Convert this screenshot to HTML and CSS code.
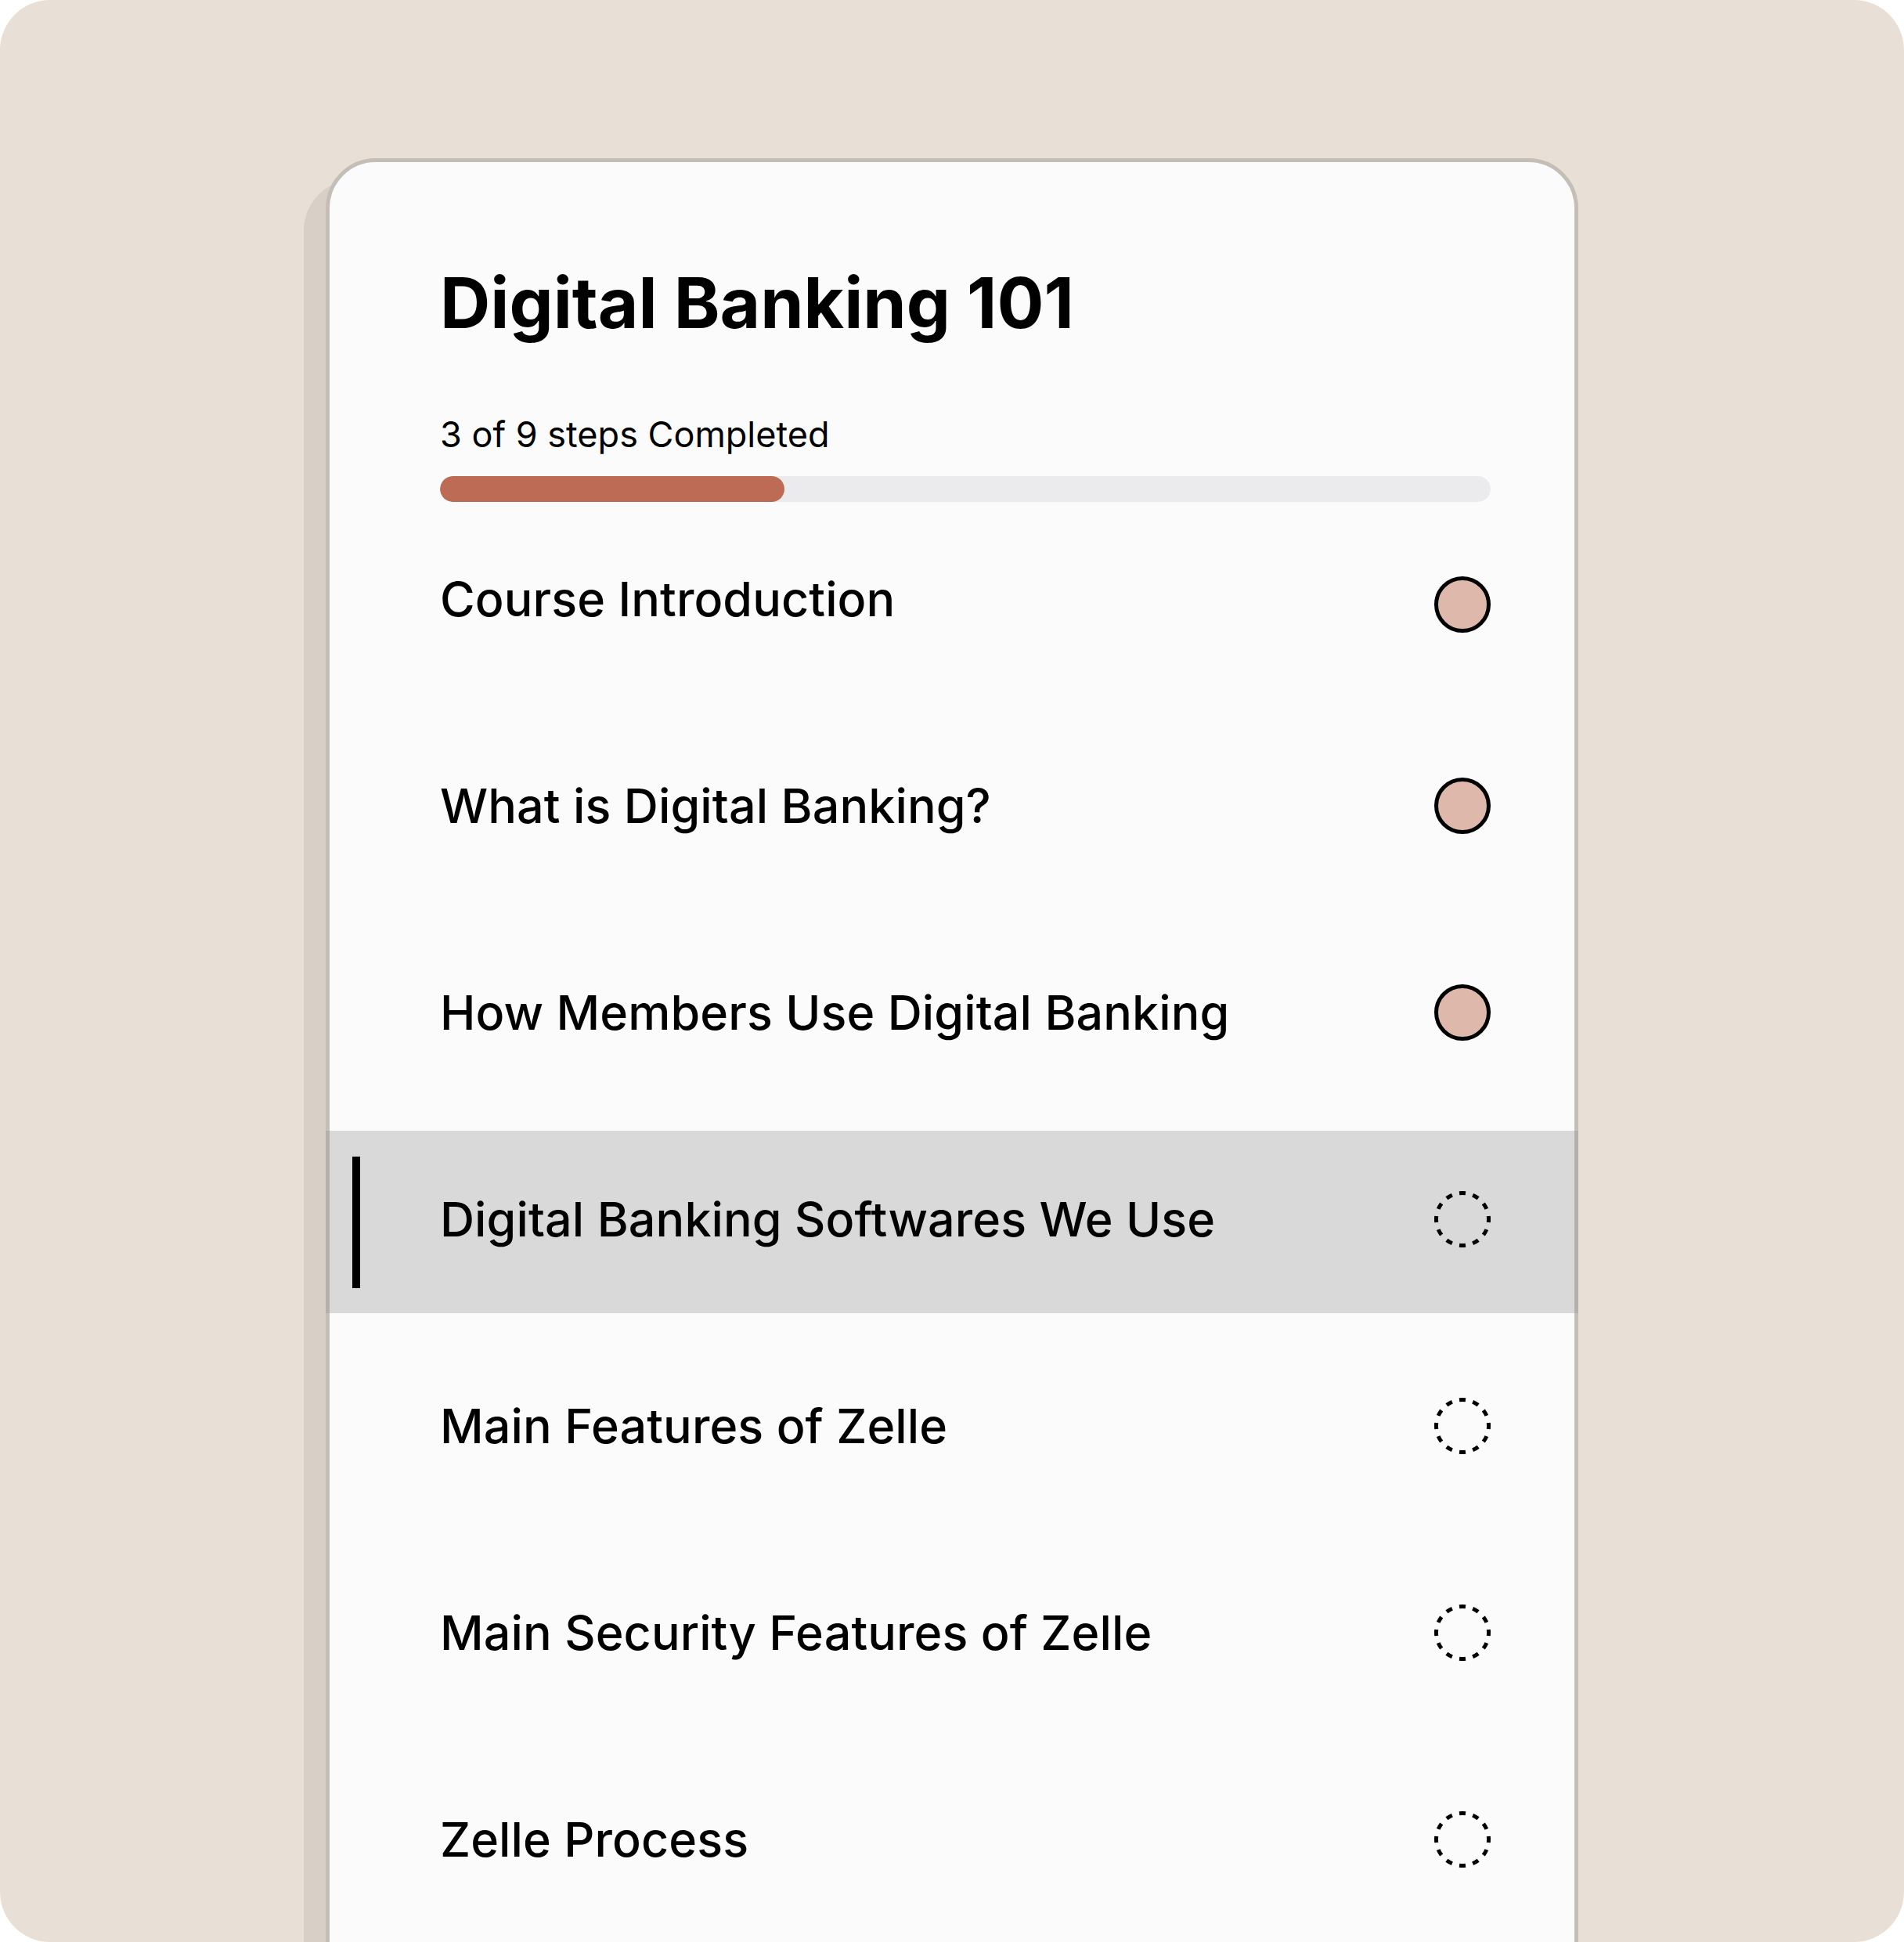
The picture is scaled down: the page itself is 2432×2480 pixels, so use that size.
FILE: index.html
```html
<!DOCTYPE html>
<html lang="en">
<head>
<meta charset="utf-8">
<title>Digital Banking 101</title>
<link rel="stylesheet" href="styles.css">
</head>
<body>
<div class="frame">
  <section class="card">
    <header class="card-head">
      <h1 class="title">Digital Banking 101</h1>
      <p class="progress-label">3 of 9 steps Completed</p>
      <div class="track"><div class="fill" style="width: 32.75%"></div></div>
    </header>
    <ul class="steps">
      <li class="step">
        <span class="step-name">Course Introduction</span>
        <svg class="status" viewBox="0 0 72 72"><circle class="done" cx="36" cy="36" r="33.5"/></svg>
      </li>
      <li class="step">
        <span class="step-name">What is Digital Banking?</span>
        <svg class="status" viewBox="0 0 72 72"><circle class="done" cx="36" cy="36" r="33.5"/></svg>
      </li>
      <li class="step">
        <span class="step-name">How Members Use Digital Banking</span>
        <svg class="status" viewBox="0 0 72 72"><circle class="done" cx="36" cy="36" r="33.5"/></svg>
      </li>
      <li class="step active">
        <span class="step-name">Digital Banking Softwares We Use</span>
        <svg class="status" viewBox="0 0 72 72"><circle class="todo" cx="36" cy="36" r="33.5" pathLength="120"/></svg>
      </li>
      <li class="step">
        <span class="step-name">Main Features of Zelle</span>
        <svg class="status" viewBox="0 0 72 72"><circle class="todo" cx="36" cy="36" r="33.5" pathLength="120"/></svg>
      </li>
      <li class="step">
        <span class="step-name">Main Security Features of Zelle</span>
        <svg class="status" viewBox="0 0 72 72"><circle class="todo" cx="36" cy="36" r="33.5" pathLength="120"/></svg>
      </li>
      <li class="step">
        <span class="step-name">Zelle Process</span>
        <svg class="status" viewBox="0 0 72 72"><circle class="todo" cx="36" cy="36" r="33.5" pathLength="120"/></svg>
      </li>
    </ul>
  </section>
</div>
</body>
</html>
```

FILE: styles.css
```css
* { box-sizing: border-box; }

html, body {
  margin: 0;
  padding: 0;
  background: #ffffff;
}

body {
  font-family: Inter, "Noto Sans", sans-serif;
  color: #000;
}

.frame {
  width: 2432px;
  height: 2480px;
  border-radius: 64px;
  background: #e8e0d7;
  overflow: hidden;
  padding: 202px 0 0 416px;
}

.card {
  width: 1600px;
  background: #fbfbfb;
  border: 5px solid #c5beb7;
  border-radius: 64px;
  box-shadow: -28px 28px 0 #d8d0c7;
  padding-bottom: 300px;
}

.card-head {
  padding: 127px 107px 0 141px;
}

.title {
  margin: 0;
  font-size: 89px;
  font-weight: 700;
  line-height: 106px;
}

.progress-label {
  margin: 88px 0 0;
  font-size: 45px;
  font-weight: 400;
  line-height: 53px;
}

.track {
  margin-top: 27px;
  height: 33px;
  border-radius: 17px;
  background: #ebebed;
  overflow: hidden;
}

.fill {
  height: 100%;
  border-radius: 17px;
  background: #bd6b55;
}

.steps {
  list-style: none;
  margin: 11px 0 0;
  padding: 0;
  display: flex;
  flex-direction: column;
  gap: 31px;
}

.step {
  position: relative;
  height: 233px;
  display: flex;
  align-items: center;
  justify-content: space-between;
  padding: 0 107px 0 141px;
}

.step-name {
  font-size: 61px;
  font-weight: 500;
  line-height: 72px;
  letter-spacing: 0.1px;
  margin-bottom: 7px;
}

.step.active {
  margin: 0 -5px;
  padding: 0 112px 0 146px;
  background: rgba(150, 150, 150, 0.333);
}

.step.active::before {
  content: "";
  position: absolute;
  left: 34px;
  top: 33px;
  bottom: 32px;
  width: 10px;
  background: #000;
}

.status {
  width: 72px;
  height: 72px;
  flex: none;
  margin-bottom: 7px;
}

.step:first-child .status {
  margin-bottom: 0;
  margin-top: 7px;
}

.done {
  fill: #deb8ab;
  stroke: #000;
  stroke-width: 5;
}

.todo {
  fill: none;
  stroke: #000;
  stroke-width: 5;
  stroke-dasharray: 4.6 5.4;
  stroke-dashoffset: 2.3;
}
```
